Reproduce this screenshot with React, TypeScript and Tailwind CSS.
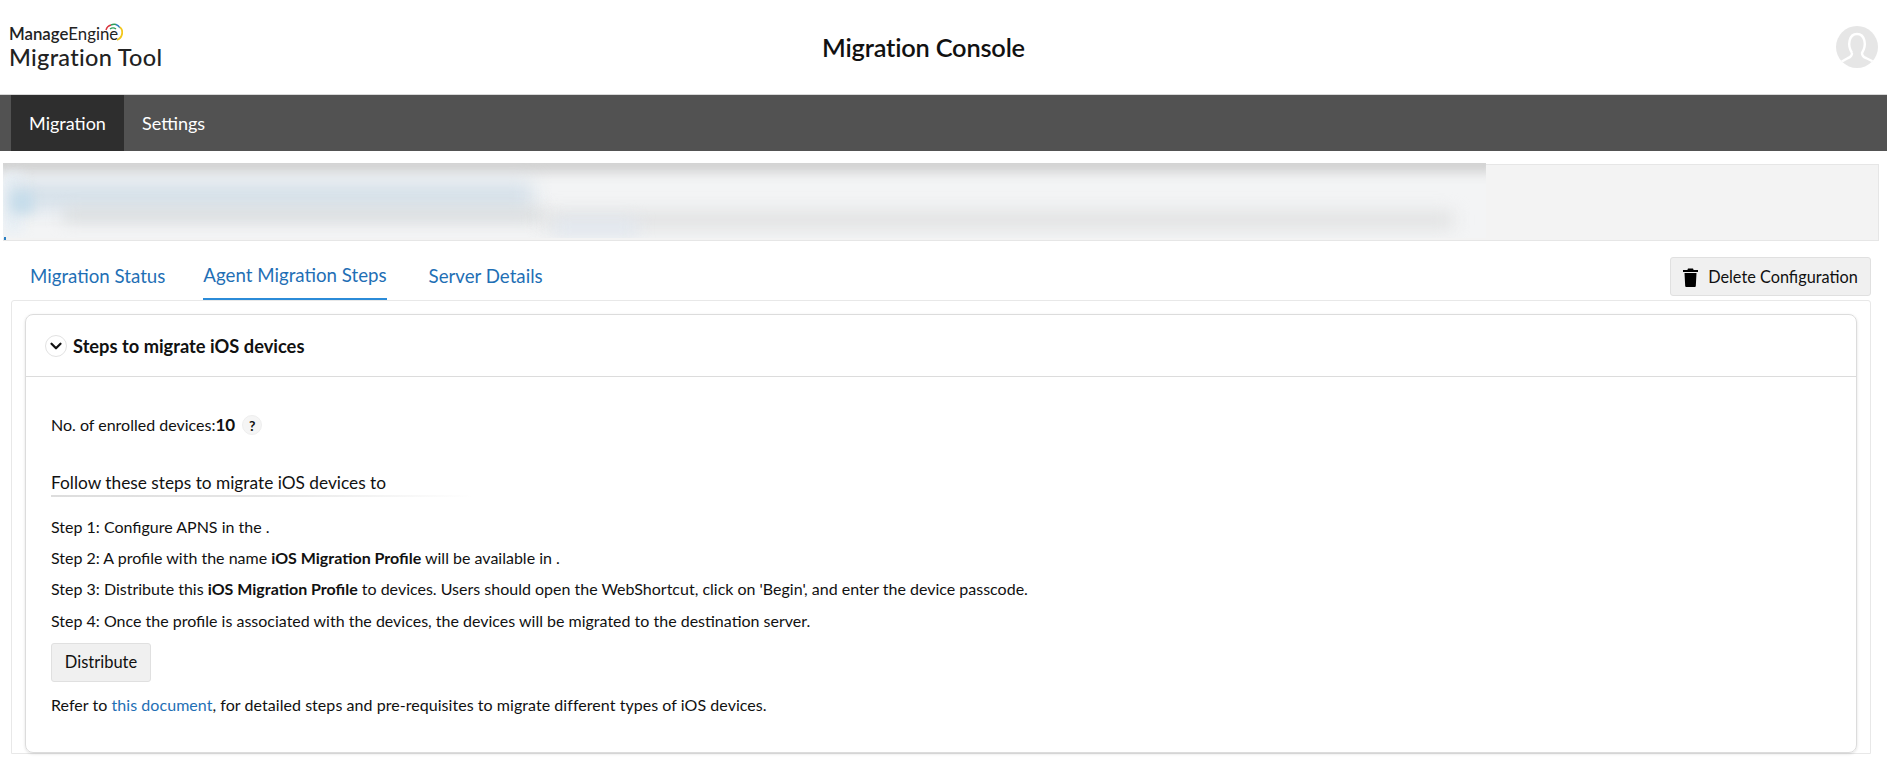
import { ChevronDown } from "lucide-react";

const TABS = ["Migration Status", "Agent Migration Steps", "Server Details"];

function Logo() {
  return (
    <div className="relative w-[170px] pt-[2px] text-[#222] leading-none">
      <div className="text-[16.8px] font-semibold">
        Manage<span className="font-normal">Engine</span>
      </div>
      <div className="mt-[3px] text-[23.5px] font-medium tracking-[0.3px]">Migration Tool</div>
      <svg className="absolute left-[96px] top-[-1px]" width="18" height="18" viewBox="0 0 18 18" fill="none" strokeWidth="1.4">
        <path d="M1 7 A7 7 0 0 1 6 2" stroke="#d9363e" />
        <path d="M6 2 A8 8 0 0 1 11 1.5" stroke="#2f9e5b" />
        <path d="M11 1.5 A8 8 0 0 1 15 5" stroke="#2b7fc3" />
        <path d="M15 4 A8 8 0 0 1 12 17" stroke="#f2c71c" strokeWidth="1.8" />
        <path d="M5 6 A5 5 0 0 1 11 6" stroke="#2f9e5b" />
      </svg>
    </div>
  );
}

function Avatar() {
  return (
    <svg width="42" height="42" viewBox="0 0 42 42">
      <defs>
        <clipPath id="avatar-clip">
          <circle cx="21" cy="21" r="21" />
        </clipPath>
      </defs>
      <circle cx="21" cy="21" r="21" fill="#e6e6e6" />
      <g clipPath="url(#avatar-clip)" fill="none" stroke="#fff" strokeWidth="2.4">
        <path d="M16 27 C11 19 13 8 21 8 C29 8 31 19 26 27 C26 30 27 31 30 32 L38 36 M16 27 C16 30 15 31 12 32 L5 36" />
      </g>
    </svg>
  );
}

function TrashIcon() {
  return (
    <svg width="15" height="19" viewBox="0 0 15 19" fill="#000">
      <path d="M5 0.5h5l0.6 1.6H15V4H0V2.100h4.400z" />
      <path d="M1.500 5h12l-0.700 13a1 1 0 0 1-1 1H3.200a1 1 0 0 1-1-1z" />
    </svg>
  );
}

function BlurredNotice() {
  return (
    <div className="absolute left-[-1px] top-[-2px] h-[75px] w-[1483px] overflow-hidden bg-[#f3f4f5]">
      <div className="absolute left-[-10px] right-[-10px] top-[-8px] h-[17px] bg-[#cfcfcf] blur-[6px]" />
      <div className="absolute left-0 top-[10px] h-[60px] w-[20px] bg-[#e8eff5] blur-[6px]" />
      <div className="absolute left-[10px] top-[20px] h-[26px] w-[520px] bg-[#d3dfe9] blur-[10px]" />
      <div className="absolute left-[8px] top-[28px] h-[22px] w-[22px] bg-[#c5dcea] blur-[6px]" />
      <div className="absolute left-[60px] top-[46px] h-[12px] w-[480px] bg-[#d6d9da] blur-[8px]" />
      <div className="absolute left-[540px] top-[50px] h-[14px] w-[910px] bg-[#dcdddd] blur-[9px]" />
      <div className="absolute left-[550px] top-[56px] h-[16px] w-[85px] bg-[#e2e8f0] blur-[8px]" />
    </div>
  );
}

export default function App() {
  return (
    <div className="h-[757px] overflow-hidden bg-white font-['Lato','Liberation_Sans',sans-serif] text-[#111]">
      <header className="flex h-[94px] items-center pl-[9px] pr-[9px]">
        <Logo />
        <h1 className="flex-1 pr-[168px] text-center text-[25.4px] font-semibold tracking-[-0.2px]">Migration Console</h1>
        <Avatar />
      </header>

      <nav className="flex h-[57px] border-t border-[#d8d8d8] bg-[#525252] pl-[11px] text-[18px] text-white">
        <a className="flex w-[113px] items-center justify-center bg-[#2e2e2e]">Migration</a>
        <a className="flex items-center pl-[18px]">Settings</a>
      </nav>

      <div className="relative ml-[3px] mr-[8px] mt-[13px] h-[77px] border border-[#e6e6e6] bg-[#f3f3f3]">
        <BlurredNotice />
        <span className="absolute left-0 top-[72px] h-[3px] w-[2px] bg-[#2b7fc3]" />
      </div>

      <div className="mt-[9px] flex h-[50px] items-stretch justify-between pl-[11px] pr-[16px]">
        <div className="flex items-stretch gap-[38px] pl-[19px] text-[18.7px] text-[#1f6fb5]">
          {TABS.map((tab, i) => (
            <a
              key={tab}
              className={`flex items-center pt-[3px] ${i === 1 ? "mr-[4px] border-b-2 border-[#2b8bd8]" : ""}`}
            >
              {tab}
            </a>
          ))}
        </div>
        <button className="mt-[7px] flex h-[39px] w-[201px] items-center justify-center gap-[10px] self-start rounded-[3px] border border-[#e0e0e0] bg-[#f0f0f0] pt-[1px] text-[16.3px]">
          <TrashIcon />
          Delete Configuration
        </button>
      </div>

      <div className="ml-[11px] mr-[16px] rounded-t-[3px] border border-[#e8e8e8] px-[13px] pt-[13px]">
        <div className="h-[439px] rounded-[8px] border border-[#dcdcdc] shadow-[0_1px_3px_rgba(0,0,0,0.12)]">
          <div className="flex h-[62px] items-center gap-[6px] border-b border-[#dcdcdc] pl-[19px] pt-[2px] text-[18.3px] font-bold">
            <span className="mb-[2px] flex h-[22px] w-[22px] items-center justify-center rounded-full border border-[#e2e2e2]">
              <ChevronDown size={18} strokeWidth={3} />
            </span>
            Steps to migrate iOS devices
          </div>

          <div className="px-[25px] text-[16px]">
            <div className="mt-[36px] flex h-[24px] items-center">
              No. of enrolled devices:<b className="text-[17px]">10</b>
              <span className="ml-[7px] flex h-[20px] w-[20px] items-center justify-center rounded-full border border-[#eeeeee] bg-[#f5f5f5] text-[14px] font-bold">
                ?
              </span>
            </div>

            <div className="mt-[34px] w-[422px] bg-gradient-to-r from-[#dddddd] via-[#e6e6e6] to-white pb-[2px]">
              <div className="bg-white text-[17.3px] leading-[24px]">Follow these steps to migrate iOS devices to</div>
            </div>

            <div className="mt-[18px] flex flex-col gap-[7px] leading-[24px]">
              <p>Step 1: Configure APNS in the .</p>
              <p>
                Step 2: A profile with the name <b>iOS Migration Profile</b> will be available in .
              </p>
              <p>
                Step 3: Distribute this <b>iOS Migration Profile</b> to devices. Users should open the WebShortcut, click on 'Begin', and enter the device passcode.
              </p>
              <p className="pt-[1px]">Step 4: Once the profile is associated with the devices, the devices will be migrated to the destination server.</p>
            </div>

            <button className="mt-[10px] h-[39px] w-[100px] rounded-[3px] border border-[#e0e0e0] bg-[#f0f0f0] text-[16.5px]">
              Distribute
            </button>

            <p className="mt-[11px] leading-[24px] tracking-[0.05px]">
              Refer to <a className="text-[#1f6fb5]">this document</a>, for detailed steps and pre-requisites to migrate different types of iOS devices.
            </p>
          </div>
        </div>
      </div>
    </div>
  );
}
